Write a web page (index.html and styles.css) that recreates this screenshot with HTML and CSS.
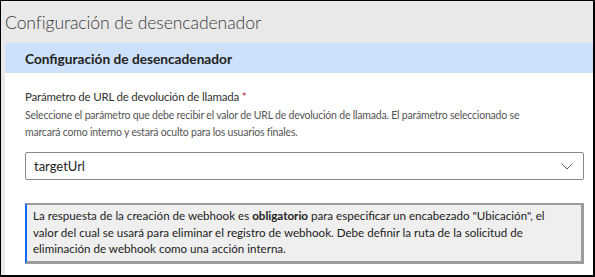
FILE: index.html
```html
<!DOCTYPE html>
<html lang="es">
  <head>
    <meta charset="UTF-8" />
    <title>Configuración de desencadenador</title>
    <link rel="stylesheet" href="styles.css">
  </head>
  <body>
    <div class="frame">
      <!-- Page title -->
      <div class="page-header">
        <h1>Configuración de desencadenador</h1>
      </div>

      <div class="page-body">
        <div class="panel">
          <div class="panel-title">Configuración de desencadenador</div>

          <div class="panel-content">
            <label class="field-label" for="callback">
              Parámetro de URL de devolución de llamada <span class="required">*</span>
            </label>
            <p class="field-help">
              Seleccione el parámetro que debe recibir el valor de URL de devolución de llamada. El parámetro seleccionado se<br />
              marcará como interno y estará oculto para los usuarios finales.
            </p>

            <div class="dropdown" id="callback">
              <span class="dropdown-value">targetUrl</span>
              <svg class="chevron" width="12" height="7" viewBox="0 0 12 7">
                <path d="M0.5 0.5 L6 6 L11.5 0.5" fill="none" stroke="#605e5c" stroke-width="1" />
              </svg>
            </div>

            <!-- Info message -->
            <div class="info-box">
              La respuesta de la creación de webhook es <b>obligatorio</b> para especificar un encabezado "Ubicación", el<br />
              valor del cual se usará para eliminar el registro de webhook. Debe definir la ruta de la solicitud de<br />
              eliminación de webhook como una acción interna.
            </div>
          </div>
        </div>
      </div>
    </div>
  </body>
</html>
```

FILE: styles.css
```css
body {
  margin: 0;
  padding: 0;
  font-family: "Lato", "Noto Sans", sans-serif;
  color: #323130;
  background: #fff;
}

/* Outer frame */
.frame {
  width: 595px;
  height: 277px;
  box-sizing: border-box;
  border: 1px solid #000;
  border-right-width: 2px;
  border-bottom-width: 2px;
  background-color: #e9e9e9;
  display: flex;
  flex-direction: column;
  overflow: hidden;
}

/* Grey header */
.page-header {
  height: 42px;
  padding-left: 4px;
  display: flex;
  align-items: center;
}

.page-header h1 {
  margin: 0;
  font-size: 17.6px;
  font-weight: 300;
  color: #3b3b3b;
  letter-spacing: -0.1px;
}

.page-body {
  flex: 1;
  padding-left: 4px;
  display: flex;
}

/* White panel */
.panel {
  flex: 1;
  background: #fff;
}

.panel-title {
  height: 30px;
  padding-left: 20px;
  display: flex;
  align-items: center;
  background-color: #cde1fb;
  font-size: 13.7px;
  font-weight: 700;
  color: #222;
}

.panel-content {
  padding: 16px 9px 0 20px;
}

.field-label {
  display: block;
  font-size: 11.5px;
  line-height: 16px;
  letter-spacing: -0.2px;
  color: #323130;
}

.required {
  color: #a4262c;
}

.field-help {
  margin: 2px 0 0;
  font-size: 10.5px;
  line-height: 17px;
  letter-spacing: -0.2px;
  color: #555;
  white-space: nowrap;
}

/* Dropdown */
.dropdown {
  margin-top: 11px;
  height: 28px;
  box-sizing: border-box;
  border: 1px solid #8a8886;
  border-radius: 2px;
  padding: 0 6px 0 8px;
  display: flex;
  align-items: center;
  justify-content: space-between;
}

.dropdown-value {
  font-size: 13px;
  color: #222;
}

.chevron {
  margin-right: 4px;
}

/* Info message box */
.info-box {
  margin-top: 23px;
  padding: 3px 8px 3px 6px;
  background-color: #efefef;
  border: 2px solid #9b9b9b;
  border-bottom-width: 3px;
  border-right-width: 3px;
  border-left: 2px solid #0f6cfb;
  font-size: 11.6px;
  line-height: 16.5px;
  color: #222;
  white-space: nowrap;
}

.info-box b {
  font-weight: 700;
}
```
